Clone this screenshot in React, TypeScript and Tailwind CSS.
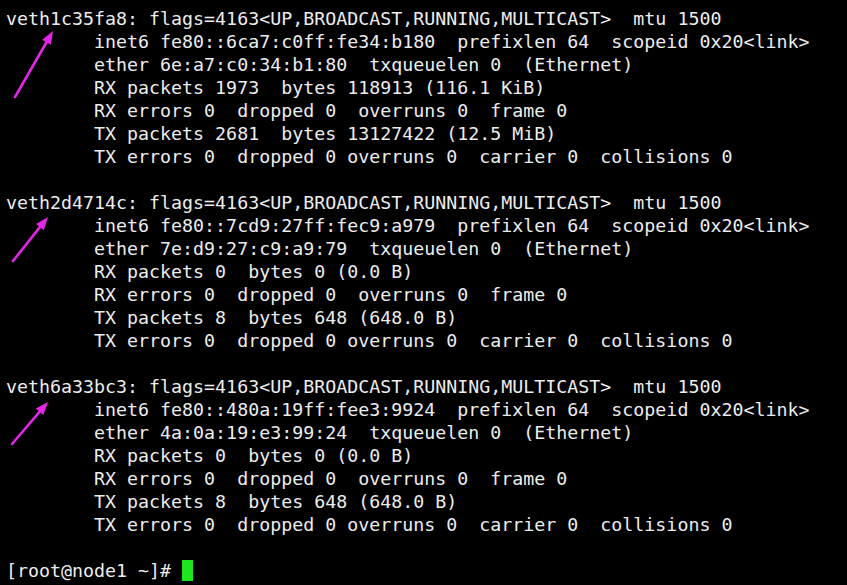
const blocks = [
  {
    name: "veth1c35fa8",
    inet6: "fe80::6ca7:c0ff:fe34:b180",
    ether: "6e:a7:c0:34:b1:80",
    rx: "RX packets 1973  bytes 118913 (116.1 KiB)",
    tx: "TX packets 2681  bytes 13127422 (12.5 MiB)",
  },
  {
    name: "veth2d4714c",
    inet6: "fe80::7cd9:27ff:fec9:a979",
    ether: "7e:d9:27:c9:a9:79",
    rx: "RX packets 0  bytes 0 (0.0 B)",
    tx: "TX packets 8  bytes 648 (648.0 B)",
  },
  {
    name: "veth6a33bc3",
    inet6: "fe80::480a:19ff:fee3:9924",
    ether: "4a:0a:19:e3:99:24",
    rx: "RX packets 0  bytes 0 (0.0 B)",
    tx: "TX packets 8  bytes 648 (648.0 B)",
  },
];

const pad = "        ";

// magenta arrows drawn over the terminal
const arrows = [
  { x1: 15, y1: 97, x2: 53, y2: 31 },
  { x1: 13, y1: 261, x2: 48, y2: 217 },
  { x1: 12, y1: 444, x2: 48, y2: 402 },
];

function Arrow({ x1, y1, x2, y2 }: { x1: number; y1: number; x2: number; y2: number }) {
  const dx = x2 - x1;
  const dy = y2 - y1;
  const len = Math.hypot(dx, dy);
  const ux = dx / len;
  const uy = dy / len;
  const hl = 13;
  const hw = 5;
  const bx = x2 - ux * hl;
  const by = y2 - uy * hl;
  const pts = `${x2},${y2} ${bx - uy * hw},${by + ux * hw} ${bx + uy * hw},${by - ux * hw}`;
  return (
    <g>
      <line x1={x1} y1={y1} x2={bx} y2={by} stroke="#e326e6" strokeWidth={2.6} strokeLinecap="round" />
      <polygon points={pts} fill="#e326e6" />
    </g>
  );
}

export default function App() {
  const lines: string[] = [];
  blocks.forEach((b) => {
    lines.push(`${b.name}: flags=4163<UP,BROADCAST,RUNNING,MULTICAST>  mtu 1500`);
    lines.push(`${pad}inet6 ${b.inet6}  prefixlen 64  scopeid 0x20<link>`);
    lines.push(`${pad}ether ${b.ether}  txqueuelen 0  (Ethernet)`);
    lines.push(`${pad}${b.rx}`);
    lines.push(`${pad}RX errors 0  dropped 0  overruns 0  frame 0`);
    lines.push(`${pad}${b.tx}`);
    lines.push(`${pad}TX errors 0  dropped 0 overruns 0  carrier 0  collisions 0`);
    lines.push("");
  });

  return (
    <div className="relative w-[847px] h-[585px] overflow-hidden bg-black">
      <pre className="pl-[6px] pt-[7px] text-[18.3px] leading-[23px] text-[#ededed] font-['DejaVu_Sans_Mono',monospace] whitespace-pre">
        {lines.map((l, i) => (
          <div key={i} className="h-[23px]">
            {l}
          </div>
        ))}
        <div className="flex h-[23px] items-center">
          <span>{"[root@node1 ~]# "}</span>
          <span className="inline-block w-[11px] h-[21px] bg-[#1ee61e]" />
        </div>
      </pre>
      <svg className="absolute left-0 top-0" width={847} height={585}>
        {arrows.map((a, i) => (
          <Arrow key={i} {...a} />
        ))}
      </svg>
    </div>
  );
}
